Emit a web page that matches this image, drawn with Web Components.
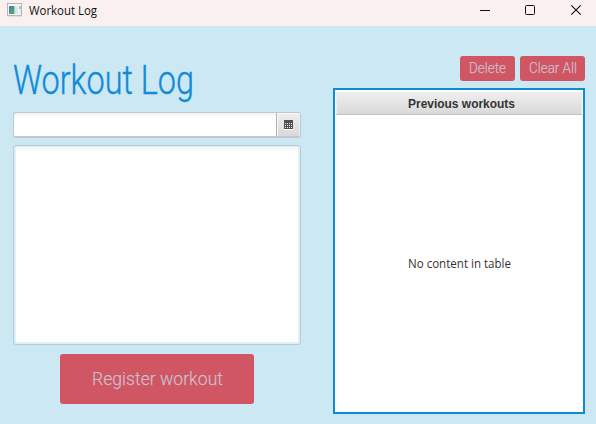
<!DOCTYPE html>
<html lang="en">
<head>
<meta charset="utf-8">
<title>Workout Log</title>
<style>
html,body{margin:0;width:596px;height:424px;overflow:hidden}
</style>
</head>
<body>
<workout-window></workout-window>
<script>
// One line of text set to an exact advance width.
customElements.define('fit-text', class extends HTMLElement {
  connectedCallback() {
    const a = n => this.getAttribute(n);
    const root = this.attachShadow({mode:'open'});
    root.innerHTML = `<style>
      :host{display:block;flex:none;width:${a('width')}px;height:${a('height')}px}
      svg{display:block;overflow:visible;fill:currentColor;stroke:currentColor;stroke-width:var(--text-stroke,0)}
      </style><svg width="${a('width')}" height="${a('height')}"><text x="0" y="${a('baseline')}" textLength="${a('width')}" lengthAdjust="spacingAndGlyphs"></text></svg>`;
    root.querySelector('text').textContent = this.getAttribute('text');
  }
});

function define(name, html) {
  const t = document.createElement('template');
  t.innerHTML = html;
  customElements.define(name, class extends HTMLElement {
    constructor() {
      super();
      this.attachShadow({mode:'open'}).append(t.content.cloneNode(true));
    }
  });
}

define('title-bar', `<style>
  :host{display:flex;height:26px;background:#f9f0ef;color:#111;box-sizing:border-box;padding-left:7px;align-items:flex-start;font:12px "Open Sans","Noto Sans",sans-serif}
  .app{margin:3px 7px 0 0;flex:none}
  .controls{margin-left:auto;flex:none}
  </style>
  <svg class="app" width="15" height="14">
    <defs><linearGradient id="g" x2="0.6" y2="1"><stop stop-color="#4a7fae"/><stop offset="1" stop-color="#52a878"/></linearGradient></defs>
    <rect x=".5" y=".5" width="14" height="12" fill="#f5f5f6" stroke="#b4b6bb"/>
    <path d="M1 13.3h14" stroke="#d4d0d0" stroke-width=".7"/>
    <rect x="2" y="3" width="5.5" height="8" fill="url(#g)"/>
    <rect x="8" y="3" width="3" height="8" fill="#e2e4e7"/>
    <rect x="12" y="3" width="2" height="3" fill="#a9cbb8"/>
    <rect x="12" y="6" width="2" height="5" fill="#e9ebed"/>
  </svg>
  <fit-text text="Workout Log" width="68" height="26" baseline="15"></fit-text>
  <svg class="controls" width="116" height="26" fill="none" stroke="#111" stroke-width="1">
    <path d="M0 10.5h10"/>
    <rect x="45.5" y="5.5" width="9" height="9" rx="1"/>
    <path d="M91.3 5.3l9.4 9.4M100.7 5.3l-9.4 9.4" stroke-width="1.1"/>
  </svg>`);

define('flat-button', `<style>
  :host{display:flex;box-sizing:border-box;background:#d05663;border-radius:3px;color:#cdbccb;justify-content:center;font-family:Roboto,sans-serif;font-weight:300;--text-stroke:.25px}
  </style><slot></slot>`);

define('date-picker', `<style>
  :host{display:flex;box-sizing:border-box;width:288px;height:26px;border:1px solid #bcc8d5;border-bottom:2px solid #c0c8d6;border-radius:3px;overflow:hidden;background:linear-gradient(#f1f1f1,#fff 5px)}
  .field{flex:1}
  .toggle{width:24px;box-sizing:border-box;border-left:1px solid #aeb0b3;background:linear-gradient(#efefef,#d9d9d9);box-shadow:inset 1px 1px #f8f8f8,inset -1px 0 #eee}
  svg{display:block;margin:7px 0 0 7px}
  </style><div class="field"></div><div class="toggle"><svg width="9" height="10" shape-rendering="crispEdges">
   <path d="M0 9h9v1H0z" fill="#fff"/><path d="M0 0h9v9H0z" fill="#515151"/>
   <path d="M1 3.5h7M1 5.5h7M1 7.5h7" stroke="#e6e6e6" stroke-dasharray="1 1"/></svg></div>`);

define('note-area', `<style>
  :host{display:block;box-sizing:border-box;width:288px;height:200px;border:1px solid #bdc8d5;border-radius:3px;padding:1px 2px 2px 2px;background:#def1f8}
  div{height:100%;background:linear-gradient(#f1f5f6,#fff 5px)}
  </style><div></div>`);

define('workout-table', `<style>
  :host{display:flex;flex-direction:column;box-sizing:border-box;width:252px;height:326px;border:2px solid #118ad4;background:#fff;padding:2px 1px 0;color:#333}
  .head{display:flex;justify-content:center;height:23px;box-sizing:border-box;padding-left:5px;border-bottom:1px solid #c3c3c3;background:linear-gradient(#efefef,#d9d9d9);box-shadow:inset 1px 0 #eee,inset -1px 0 #e9e9e9;font:bold 12px "Liberation Sans",sans-serif}
  .body{display:flex;justify-content:center;padding-top:141px;font:12px "Open Sans","Noto Sans",sans-serif}
  </style>
  <div class="head"><fit-text text="Previous workouts" width="107" height="22" baseline="16"></fit-text></div>
  <div class="body"><fit-text text="No content in table" width="103" height="16" baseline="12"></fit-text></div>`);

define('workout-window', `<style>
  :host{display:flex;flex-direction:column;width:596px;height:424px;background:#cbe8f3}
  main{display:flex;justify-content:space-between;padding:0 11px 0 13px}
  .left{width:288px;display:flex;flex-direction:column}
  .heading{color:#118ad8;font:300 40px Roboto,sans-serif;margin-bottom:6px;--text-stroke:.4px}
  note-area{margin:7px 0 9px}
  .register{width:194px;height:50px;margin-left:47px;font-size:18.5px}
  .right{width:252px;padding-top:30px}
  .actions{display:flex;justify-content:flex-end;gap:5px;margin-bottom:7px;font-size:14px}
  .actions flat-button{height:25px}
  .delete{width:55px}.clear{width:65px}
  </style>
  <title-bar></title-bar>
  <main>
    <section class="left">
      <fit-text class="heading" text="Workout Log" width="181" height="80" baseline="68"></fit-text>
      <date-picker></date-picker>
      <note-area></note-area>
      <flat-button class="register"><fit-text text="Register workout" width="131" height="50" baseline="31"></fit-text></flat-button>
    </section>
    <section class="right">
      <div class="actions">
        <flat-button class="delete"><fit-text text="Delete" width="37" height="25" baseline="17"></fit-text></flat-button>
        <flat-button class="clear"><fit-text text="Clear All" width="48" height="25" baseline="17"></fit-text></flat-button>
      </div>
      <workout-table></workout-table>
    </section>
  </main>`);
</script>
</body>
</html>
